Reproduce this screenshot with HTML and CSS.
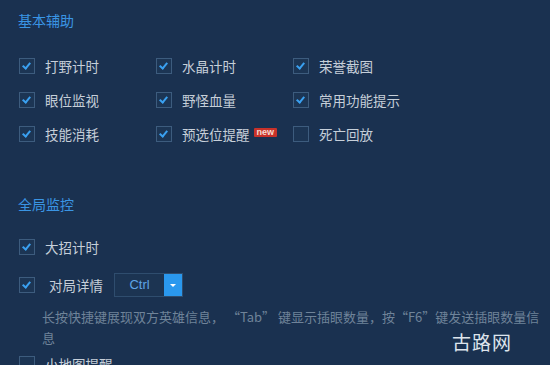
FILE: index.html
```html
<!DOCTYPE html>
<html lang="zh-CN">
<head>
<meta charset="utf-8">
<link rel="stylesheet" href="styles.css">
</head>
<body>
<div class="panel">
  <div class="section-title first">基本辅助</div>
  <div class="grid">
    <label class="opt"><span class="cb on"></span><span>打野计时</span></label>
    <label class="opt"><span class="cb on"></span><span>水晶计时</span></label>
    <label class="opt"><span class="cb on"></span><span>荣誉截图</span></label>
    <label class="opt"><span class="cb on"></span><span>眼位监视</span></label>
    <label class="opt"><span class="cb on"></span><span>野怪血量</span></label>
    <label class="opt"><span class="cb on"></span><span>常用功能提示</span></label>
    <label class="opt"><span class="cb on"></span><span>技能消耗</span></label>
    <label class="opt"><span class="cb on"></span><span>预选位提醒</span><span class="new">new</span></label>
    <label class="opt"><span class="cb"></span><span>死亡回放</span></label>
  </div>

  <div class="section-title second">全局监控</div>
  <label class="opt row"><span class="cb on"></span><span>大招计时</span></label>
  <div class="opt row tall">
    <span class="cb on"></span><span class="wide-label">对局详情</span>
    <span class="select"><span class="select-val">Ctrl</span><span class="select-btn"></span></span>
  </div>
  <p class="desc">长按快捷键展现双方英雄信息， “Tab” 键显示插眼数量，按“F6”键发送插眼数量信息</p>
  <label class="opt row last"><span class="cb"></span><span>小地图提醒</span></label>
</div>
<div class="watermark">古路网</div>
</body>
</html>
```
FILE: styles.css
```css
html, body {
  margin: 0;
  padding: 0;
  width: 550px;
  height: 365px;
  overflow: hidden;
  background: #1a3150;
  font-family: "Noto Sans CJK SC", "Noto Sans", sans-serif;
  color: #c6cfd9;
}
.panel {
  padding: 10px 0 0 19px;
}
.section-title {
  font-size: 14px;
  line-height: 20px;
  color: #3a95e4;
}
.section-title.first { margin-bottom: 19px; margin-left: -1px; }
.section-title.second { margin-top: 43px; margin-bottom: 16px; margin-left: -1px; }
.grid {
  display: grid;
  grid-template-columns: 137px 137px 137px;
  grid-auto-rows: 34px;
}
.opt {
  display: flex;
  align-items: center;
  font-size: 13.5px;
  height: 34px;
  gap: 10px;
}
.row.tall { height: 42px; }
.row.last { margin-top: -1px; }
.wide-label { margin-left: 4px; margin-right: 1px; }
.cb {
  width: 14px;
  height: 14px;
  border: 1px solid #3d5c7e;
  background: #1c3554;
  flex: none;
  position: relative;
}
.cb.on::after {
  content: "";
  position: absolute;
  left: 4px;
  top: 2px;
  width: 3px;
  height: 6px;
  border: solid #3aa0f0;
  border-width: 0 2px 2px 0;
  transform: rotate(40deg);
}
.new {
  margin-left: -6px;
  background: #c8322a;
  color: #f6dcd4;
  font-size: 9px;
  line-height: 9px;
  height: 9px;
  padding: 0 3px;
  font-family: "Liberation Sans", sans-serif;
  font-weight: bold;
  border-radius: 1px;
  margin-top: -3px;
}
.select {
  display: flex;
  height: 22px;
  border: 1px solid #2f4d6e;
  background: #1c3452;
}
.select-val {
  width: 49px;
  text-align: center;
  line-height: 22px;
  font-size: 13px;
  color: #5fa4e6;
  font-family: "Liberation Sans", sans-serif;
}
.select-btn {
  width: 18px;
  background: #2a98ee;
  position: relative;
}
.select-btn::after {
  content: "";
  position: absolute;
  left: 6px;
  top: 10px;
  border-left: 3px solid transparent;
  border-right: 3px solid transparent;
  border-top: 3px solid #ffffff;
}
.desc {
  margin: 0 0 0 23px;
  font-size: 13px;
  line-height: 21px;
  color: #6f8399;
  width: 508px;
}
.watermark {
  position: absolute;
  left: 452px;
  top: 329px;
  font-size: 19px;
  line-height: 26px;
  color: #dde4ec;
  letter-spacing: 1px;
}
```
